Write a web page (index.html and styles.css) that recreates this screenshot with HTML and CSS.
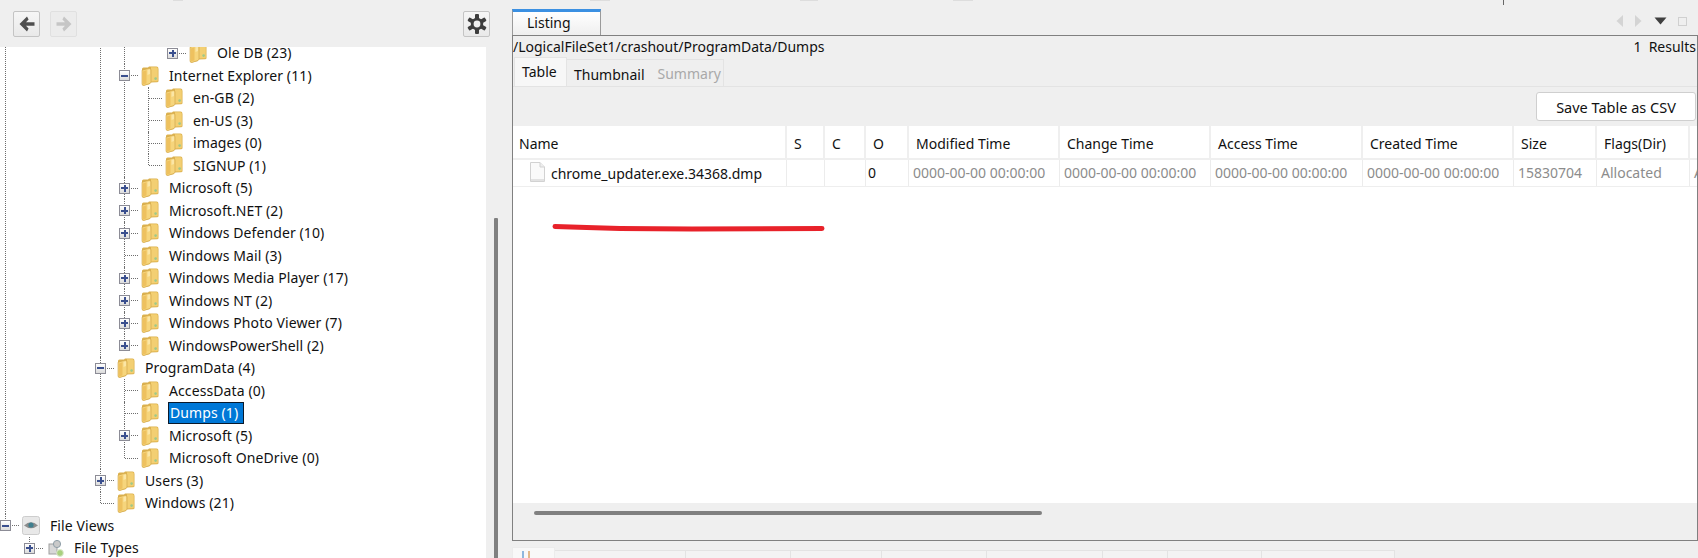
FILE: index.html
```html
<!DOCTYPE html>
<html lang="en">
<head>
<meta charset="utf-8">
<title>Listing</title>
<link rel="stylesheet" href="styles.css">
</head>
<body>
<svg class="defs" aria-hidden="true">
  <symbol id="folder" viewBox="0 0 18 20">
    <path d="M1 3 Q1 1.500 2.500 1.500 L7 1.500 L8 0.600 L15.500 0.600 Q17.500 0.600 17.500 3 L17.500 15 Q17.500 16.200 16 16.200 L9 16.500 L9 18 L3 19.500 Q1 19.800 1 17.800 Z" fill="#dcb14e"/>
    <path d="M10 1.200 L15.500 1.200 Q16.800 1.200 16.800 3 L16.800 15.300 L10 15.600 Z" fill="#f3cf72"/>
    <path d="M1 4.200 L8 2.300 Q10 2 10 4 L10 16 Q10 17.300 8.400 17.700 L3 19.400 Q1 19.800 1 17.800 Z" fill="#f6d57c" stroke="#cfa347" stroke-width="0.600"/>
    <path d="M1.800 5.500 L5.500 4.300 L5.500 17.600 L1.800 18.600 Z" fill="#eec15f"/>
    <path d="M6.500 4 L9 3.300 L9 8 L6.500 9 Z" fill="#fbe6a6"/>
    <circle cx="14.600" cy="12.600" r="1.300" fill="#9ec98a"/>
  </symbol>
</svg>
<i class="mark mark-a"></i><i class="mark mark-b"></i><i class="mark mark-c"></i><i class="mark mark-d"></i><i class="mark mark-tick"></i>
<div class="app">
  <section class="left">
    <div class="toolbar">
      <button class="tool" aria-label="Back"><svg width="18" height="18" viewBox="0 0 18 18"><path d="M9 1.500 L1.500 9 L9 16.500 L10.600 13.400 L8 10.700 L16.500 10.700 L16.500 7.300 L8 7.300 L10.600 4.600 Z" fill="#4f4f4f"/></svg></button>
      <button class="tool tool-off" aria-label="Forward"><svg width="18" height="18" viewBox="0 0 18 18"><path d="M9 1.500 L16.500 9 L9 16.500 L7.400 13.400 L10 10.700 L1.500 10.700 L1.500 7.300 L10 7.300 L7.400 4.600 Z" fill="#c6c6c6"/></svg></button>
      <span class="spacer"></span>
      <button class="tool tool-gear" aria-label="Settings"><svg width="22" height="22" viewBox="-11 -11 22 22"><g fill="#3d3d3d"><rect x="-2" y="-10" width="4" height="20" rx="1"/><rect x="-2" y="-10" width="4" height="20" rx="1" transform="rotate(60)"/><rect x="-2" y="-10" width="4" height="20" rx="1" transform="rotate(120)"/></g><circle r="6.200" fill="#3d3d3d"/><circle r="3.400" fill="#efefef"/></svg></button>
    </div>
    <div class="left-body">
      <div class="tree">
        <ul class="branch root">
          <li>
            <ul class="branch jump-l4">
              <li>
                <ul class="branch">
                  <li>
                    <ul class="branch jump-l7">
                      <li><div class="row"><span class="toggle plus"></span><span class="conn"></span><svg class="folder"><use href="#folder"/></svg><span class="label">Ole DB (23)</span></div></li>
                    </ul>
                  </li>
                  <li>
                    <div class="row"><span class="toggle minus"></span><span class="conn"></span><svg class="folder"><use href="#folder"/></svg><span class="label">Internet Explorer (11)</span></div>
                    <ul class="branch">
                      <li><div class="row"><span class="conn-leaf"></span><svg class="folder"><use href="#folder"/></svg><span class="label">en-GB (2)</span></div></li>
                      <li><div class="row"><span class="conn-leaf"></span><svg class="folder"><use href="#folder"/></svg><span class="label">en-US (3)</span></div></li>
                      <li><div class="row"><span class="conn-leaf"></span><svg class="folder"><use href="#folder"/></svg><span class="label">images (0)</span></div></li>
                      <li><div class="row"><span class="conn-leaf"></span><svg class="folder"><use href="#folder"/></svg><span class="label">SIGNUP (1)</span></div></li>
                    </ul>
                  </li>
                  <li><div class="row"><span class="toggle plus"></span><span class="conn"></span><svg class="folder"><use href="#folder"/></svg><span class="label">Microsoft (5)</span></div></li>
                  <li><div class="row"><span class="toggle plus"></span><span class="conn"></span><svg class="folder"><use href="#folder"/></svg><span class="label">Microsoft.NET (2)</span></div></li>
                  <li><div class="row"><span class="toggle plus"></span><span class="conn"></span><svg class="folder"><use href="#folder"/></svg><span class="label">Windows Defender (10)</span></div></li>
                  <li><div class="row"><span class="conn-leaf"></span><svg class="folder"><use href="#folder"/></svg><span class="label">Windows Mail (3)</span></div></li>
                  <li><div class="row"><span class="toggle plus"></span><span class="conn"></span><svg class="folder"><use href="#folder"/></svg><span class="label">Windows Media Player (17)</span></div></li>
                  <li><div class="row"><span class="toggle plus"></span><span class="conn"></span><svg class="folder"><use href="#folder"/></svg><span class="label">Windows NT (2)</span></div></li>
                  <li><div class="row"><span class="toggle plus"></span><span class="conn"></span><svg class="folder"><use href="#folder"/></svg><span class="label">Windows Photo Viewer (7)</span></div></li>
                  <li><div class="row"><span class="toggle plus"></span><span class="conn"></span><svg class="folder"><use href="#folder"/></svg><span class="label">WindowsPowerShell (2)</span></div></li>
                </ul>
              </li>
              <li>
                <div class="row"><span class="toggle minus"></span><span class="conn"></span><svg class="folder"><use href="#folder"/></svg><span class="label">ProgramData (4)</span></div>
                <ul class="branch">
                  <li><div class="row"><span class="conn-leaf"></span><svg class="folder"><use href="#folder"/></svg><span class="label">AccessData (0)</span></div></li>
                  <li><div class="row"><span class="conn-leaf"></span><svg class="folder"><use href="#folder"/></svg><span class="label selected">Dumps (1)</span></div></li>
                  <li><div class="row"><span class="toggle plus"></span><span class="conn"></span><svg class="folder"><use href="#folder"/></svg><span class="label">Microsoft (5)</span></div></li>
                  <li><div class="row"><span class="conn-leaf"></span><svg class="folder"><use href="#folder"/></svg><span class="label">Microsoft OneDrive (0)</span></div></li>
                </ul>
              </li>
              <li><div class="row"><span class="toggle plus"></span><span class="conn"></span><svg class="folder"><use href="#folder"/></svg><span class="label">Users (3)</span></div></li>
              <li><div class="row"><span class="conn-leaf"></span><svg class="folder"><use href="#folder"/></svg><span class="label">Windows (21)</span></div></li>
            </ul>
          </li>
          <li>
            <div class="row"><span class="toggle minus"></span><span class="conn"></span>
              <svg class="folder" viewBox="0 0 18 20"><rect x="0.500" y="0.500" width="17" height="18" rx="2" fill="#e8e8e8" stroke="#cdcdcd"/><path d="M2 9.500 Q9 3 16 9.500 Q9 15 2 9.500 Z" fill="#8d8d8d"/><circle cx="9" cy="9" r="2.600" fill="#3f7f8f"/></svg>
              <span class="label">File Views</span></div>
            <ul class="branch">
              <li><div class="row"><span class="toggle plus"></span><span class="conn"></span>
                <svg class="folder" viewBox="0 0 18 20"><rect x="3" y="6" width="8" height="10" fill="#d8d8d8" stroke="#a0a0a0"/><circle cx="11" cy="6" r="3.600" fill="#c9c9c9" stroke="#8f9fa8"/><circle cx="14" cy="15" r="3.400" fill="#a9d07f" stroke="#dfe9d2"/></svg>
                <span class="label">File Types</span></div></li>
            </ul>
          </li>
        </ul>
      </div>
      <div class="tree-scroll"><span class="thumb-v"></span></div>
    </div>
  </section>

  <section class="right">
    <div class="tabstrip">
      <div class="tab">Listing</div>
      <div class="win-icons">
        <svg width="9" height="14" viewBox="0 0 9 14"><path d="M8 1 L1.500 7 L8 13 Z" fill="#d4d4d4"/></svg>
        <svg width="9" height="14" viewBox="0 0 9 14"><path d="M1 1 L7.500 7 L1 13 Z" fill="#d4d4d4"/></svg>
        <svg width="13" height="8" viewBox="0 0 13 8"><path d="M0.500 0.500 L12.500 0.500 L6.500 7.500 Z" fill="#3f3f3f"/></svg>
        <span class="maximize"></span>
      </div>
    </div>
    <div class="panel">
      <div class="pathbar"><span>/LogicalFileSet1/crashout/ProgramData/Dumps</span><span class="count">1&nbsp;&nbsp;Results</span></div>
      <div class="subtabs">
        <div class="subtab active">Table</div>
        <div class="subtab-group"><span class="subtab thumb-tab">Thumbnail</span><span class="subtab disabled">Summary</span></div>
      </div>
      <div class="actions"><button class="save">Save Table as CSV</button></div>
      <div class="table">
        <div class="grid thead">
          <div class="cell">Name</div><div class="cell">S</div><div class="cell">C</div><div class="cell">O</div><div class="cell">Modified Time</div><div class="cell">Change Time</div><div class="cell">Access Time</div><div class="cell">Created Time</div><div class="cell">Size</div><div class="cell">Flags(Dir)</div><div class="cell"></div>
        </div>
        <div class="grid tbody">
          <div class="cell cell-name"><svg class="file" viewBox="0 0 15 20"><path d="M0.500 0.500 L10 0.500 L14.500 5 L14.500 19.500 L0.500 19.500 Z" fill="#fafafa" stroke="#d2d2d2"/><path d="M1 17 L14 17 L14 19 L1 19 Z" fill="#e2e2e2"/><path d="M10 0.500 L10 5 L14.500 5" fill="#eeeeee" stroke="#d2d2d2"/></svg>chrome_updater.exe.34368.dmp</div>
          <div class="cell"></div><div class="cell"></div><div class="cell cell-o">0</div>
          <div class="cell muted">0000-00-00 00:00:00</div><div class="cell muted">0000-00-00 00:00:00</div><div class="cell muted">0000-00-00 00:00:00</div><div class="cell muted">0000-00-00 00:00:00</div>
          <div class="cell muted">15830704</div><div class="cell muted">Allocated</div><div class="cell muted">Allocated</div>
        </div>
        <svg class="scribble" width="276" height="10" viewBox="0 0 276 10"><path d="M3 3.500 C40 5 90 6 140 6 C190 6 235 5.800 270 5.500" fill="none" stroke="#e8222a" stroke-width="5" stroke-linecap="round"/></svg>
      </div>
      <div class="hscroll"><span class="thumb-h"></span></div>
    </div>
    <div class="bottom-tabs">
      <div class="btab first"><svg width="9" height="8" viewBox="0 0 9 8"><rect x="0" y="1" width="2" height="7" fill="#8fb7dd"/><rect x="6" y="1" width="2" height="7" fill="#e3b98a"/></svg></div>
      <div class="btab w1"></div><div class="btab w2"></div><div class="btab w3"></div><div class="btab w4"></div><div class="btab w5"></div><div class="btab w6"></div><div class="btab w7"></div><div class="btab w8"></div>
    </div>
  </section>
</div>
</body>
</html>
```

FILE: styles.css
```css
* { box-sizing: border-box; }
html, body { margin: 0; height: 100%; }
body {
  background: #efefef;
  color: #111;
  font: 14px/20px "Noto Sans", "Open Sans", sans-serif;
  overflow: hidden;
  position: relative;
}
ul { list-style: none; margin: 0; padding: 0; }
.defs { position: absolute; width: 0; height: 0; }

.mark { position: absolute; top: 0; height: 1px; background: #dddddd; }
.mark-a { left: 173px; width: 10px; }
.mark-b { left: 590px; width: 20px; }
.mark-c { left: 800px; width: 18px; }
.mark-d { left: 953px; width: 20px; }
.mark-tick { left: 1503px; width: 1px; height: 5px; background: #666; }

.app { display: flex; height: 558px; }

/* left pane */
.left { width: 512px; display: flex; flex-direction: column; flex: none; }
.toolbar { height: 47px; flex: none; display: flex; align-items: flex-start; padding: 11px 22px 0 13px; gap: 10px; }
.spacer { flex: 1; }
.tool {
  width: 27px; height: 26px; padding: 0;
  display: flex; align-items: center; justify-content: center;
  background: linear-gradient(#f6f6f6, #e9e9e9);
  border: 1px solid #c4c4c4; border-radius: 2px;
}
.tool-off { background: #ececec; border-color: #e0e0e0; }

.left-body { flex: 1; min-height: 0; display: flex; }
.tree { width: 486px; flex: none; background: #fff; overflow: hidden; }
.tree-scroll { flex: 1; display: flex; padding: 171px 0 0 8px; }
.thumb-v { width: 4px; background: #808080; border-radius: 1px 1px 0 0; }

.root { margin-top: -5.25px; }
.branch { margin-left: 24px; }
.root { margin-left: 0; }
.jump-l4 { margin-left: 95px; }
.jump-l7 { margin-left: 48px; }
.branch > li { position: relative; }
.branch > li::before {
  content: ""; position: absolute; left: 5px; top: 0; bottom: 0;
  border-left: 1px dotted #6e6e6e;
}
.branch > li:last-child::before { bottom: auto; height: 11px; }
.jump-l7 > li::before { display: none; }

.row { position: relative; height: 22.5px; display: flex; align-items: center; white-space: nowrap; }
.toggle {
  position: relative; width: 11px; height: 11px; flex: none;
  background: linear-gradient(#fff, #dcdcdc);
  border: 1px solid #8c8c96;
}
.toggle::before {
  content: ""; position: absolute; left: 1px; top: 3.500px; width: 7px; height: 2px; background: #3a4f8e;
}
.toggle.plus::after {
  content: ""; position: absolute; left: 3.500px; top: 1px; width: 2px; height: 7px; background: #3a4f8e;
}
.conn { width: 7px; margin-left: 1px; border-top: 1px dotted #6e6e6e; flex: none; }
.conn-leaf { width: 13px; margin-left: 6px; border-top: 1px dotted #6e6e6e; flex: none; }
.folder { width: 18px; height: 20px; margin-left: 3px; flex: none; }
.label { margin-left: 10px; color: #111; letter-spacing: 0.1px; }
.selected {
  margin-left: 9px;
  padding: 0 5px 0 1px;
  height: 22px; line-height: 20px;
  background: #0078d7; color: #fff;
  border: 1px solid #0b1a2b;
}

/* right pane */
.right { flex: 1; min-width: 0; display: flex; flex-direction: column; }
.tabstrip { height: 35px; flex: none; display: flex; justify-content: space-between; align-items: flex-start; padding-top: 9px; }
.tab {
  width: 89px; height: 26px; padding: 1px 0 0 14px;
  border-top: 3px solid #3b90e2; border-left: 1px solid #9a9a9a; border-right: 1px solid #9a9a9a;
  background: linear-gradient(#ffffff, #efefef);
  line-height: 20px;
}
.win-icons { display: flex; align-items: center; gap: 10px; padding: 5px 11px 0 0; }
.win-icons svg:nth-child(3) { margin-left: 1px; }
.maximize { width: 9px; height: 9px; border: 1px solid #d0d0d0; margin-left: 1px; }

.panel {
  height: 506px; flex: none; overflow: hidden;
  display: flex; flex-direction: column;
  border: 1px solid #808080;
}
.pathbar { height: 22px; flex: none; display: flex; justify-content: space-between; white-space: nowrap; line-height: 22px; }
.count { margin-right: 1px; }
.subtabs { height: 29px; flex: none; display: flex; align-items: flex-end; padding-left: 1px; border-bottom: 1px solid #e3e3e3; }
.subtab.active { width: 53px; height: 29px; padding: 4px 0 0 7px; background: #f7f7f7; border: 1px solid #e4e4e4; border-bottom: 0; }
.subtab-group { height: 27px; width: 157px; display: flex; padding: 4px 0 0 7px; gap: 13px; border: 1px solid #e3e3e3; border-left: 0; border-bottom: 0; }
.thumb-tab { position: relative; top: 1px; }
.disabled { color: #a9a9a9; }
.actions { height: 39px; flex: none; display: flex; justify-content: flex-end; align-items: flex-start; padding: 5px 1px 0 0; }
.save {
  width: 160px; height: 29px; padding: 0;
  background: #fff; color: #111;
  border: 1px solid #cfcfcf; border-radius: 3px;
  font: 14.5px/20px "Noto Sans", "Open Sans", sans-serif;
}
.table { flex: 1; min-height: 0; background: #fff; position: relative; }
.grid {
  display: grid;
  grid-template-columns: 274px 38px 41px 43px 151px 151px 152px 151px 83px 93px 1fr;
}
.cell { border-right: 2px solid #efefef; padding-left: 7px; white-space: nowrap; overflow: hidden; }
.thead { height: 34px; border-bottom: 2px solid #efefef; }
.thead .cell { line-height: 36px; }
.thead .cell:first-child { padding-left: 6px; }
.thead .cell:last-child, .tbody .cell:last-child { border-right: 0; }
.tbody { height: 27px; border-bottom: 1px solid #eeeeee; }
.tbody .cell { line-height: 25px; padding-left: 4px; border-right-width: 1px; border-right-color: #ececec; }
.tbody .cell-o { padding-left: 2px; }
.tbody .cell-name { display: flex; align-items: center; padding-left: 17px; }
.file { width: 15px; height: 20px; margin: -3px 6px 0 0; flex: none; }
.muted { color: #8c8c8c; }
.scribble { position: absolute; left: 39px; top: 97px; }
.hscroll { height: 37px; flex: none; padding: 8px 0 0 21px; }
.thumb-h { display: block; width: 508px; height: 4px; background: #808080; border-radius: 2px; }

.bottom-tabs { flex: 1; display: flex; align-items: flex-end; }
.btab { height: 8px; background: #f3f3f3; border-top: 1px solid #e3e3e3; border-right: 1px solid #e3e3e3; flex: none; }
.btab.first { width: 43px; height: 11px; background: #f8f8f8; border: 1px solid #ececec; border-bottom: 0; padding: 2px 0 0 9px; display: flex; }
.w1 { width: 131px; } .w2 { width: 105px; } .w3 { width: 91px; } .w4 { width: 105px; }
.w5 { width: 116px; } .w6 { width: 65px; } .w7 { width: 94px; } .w8 { width: 133px; }
```
